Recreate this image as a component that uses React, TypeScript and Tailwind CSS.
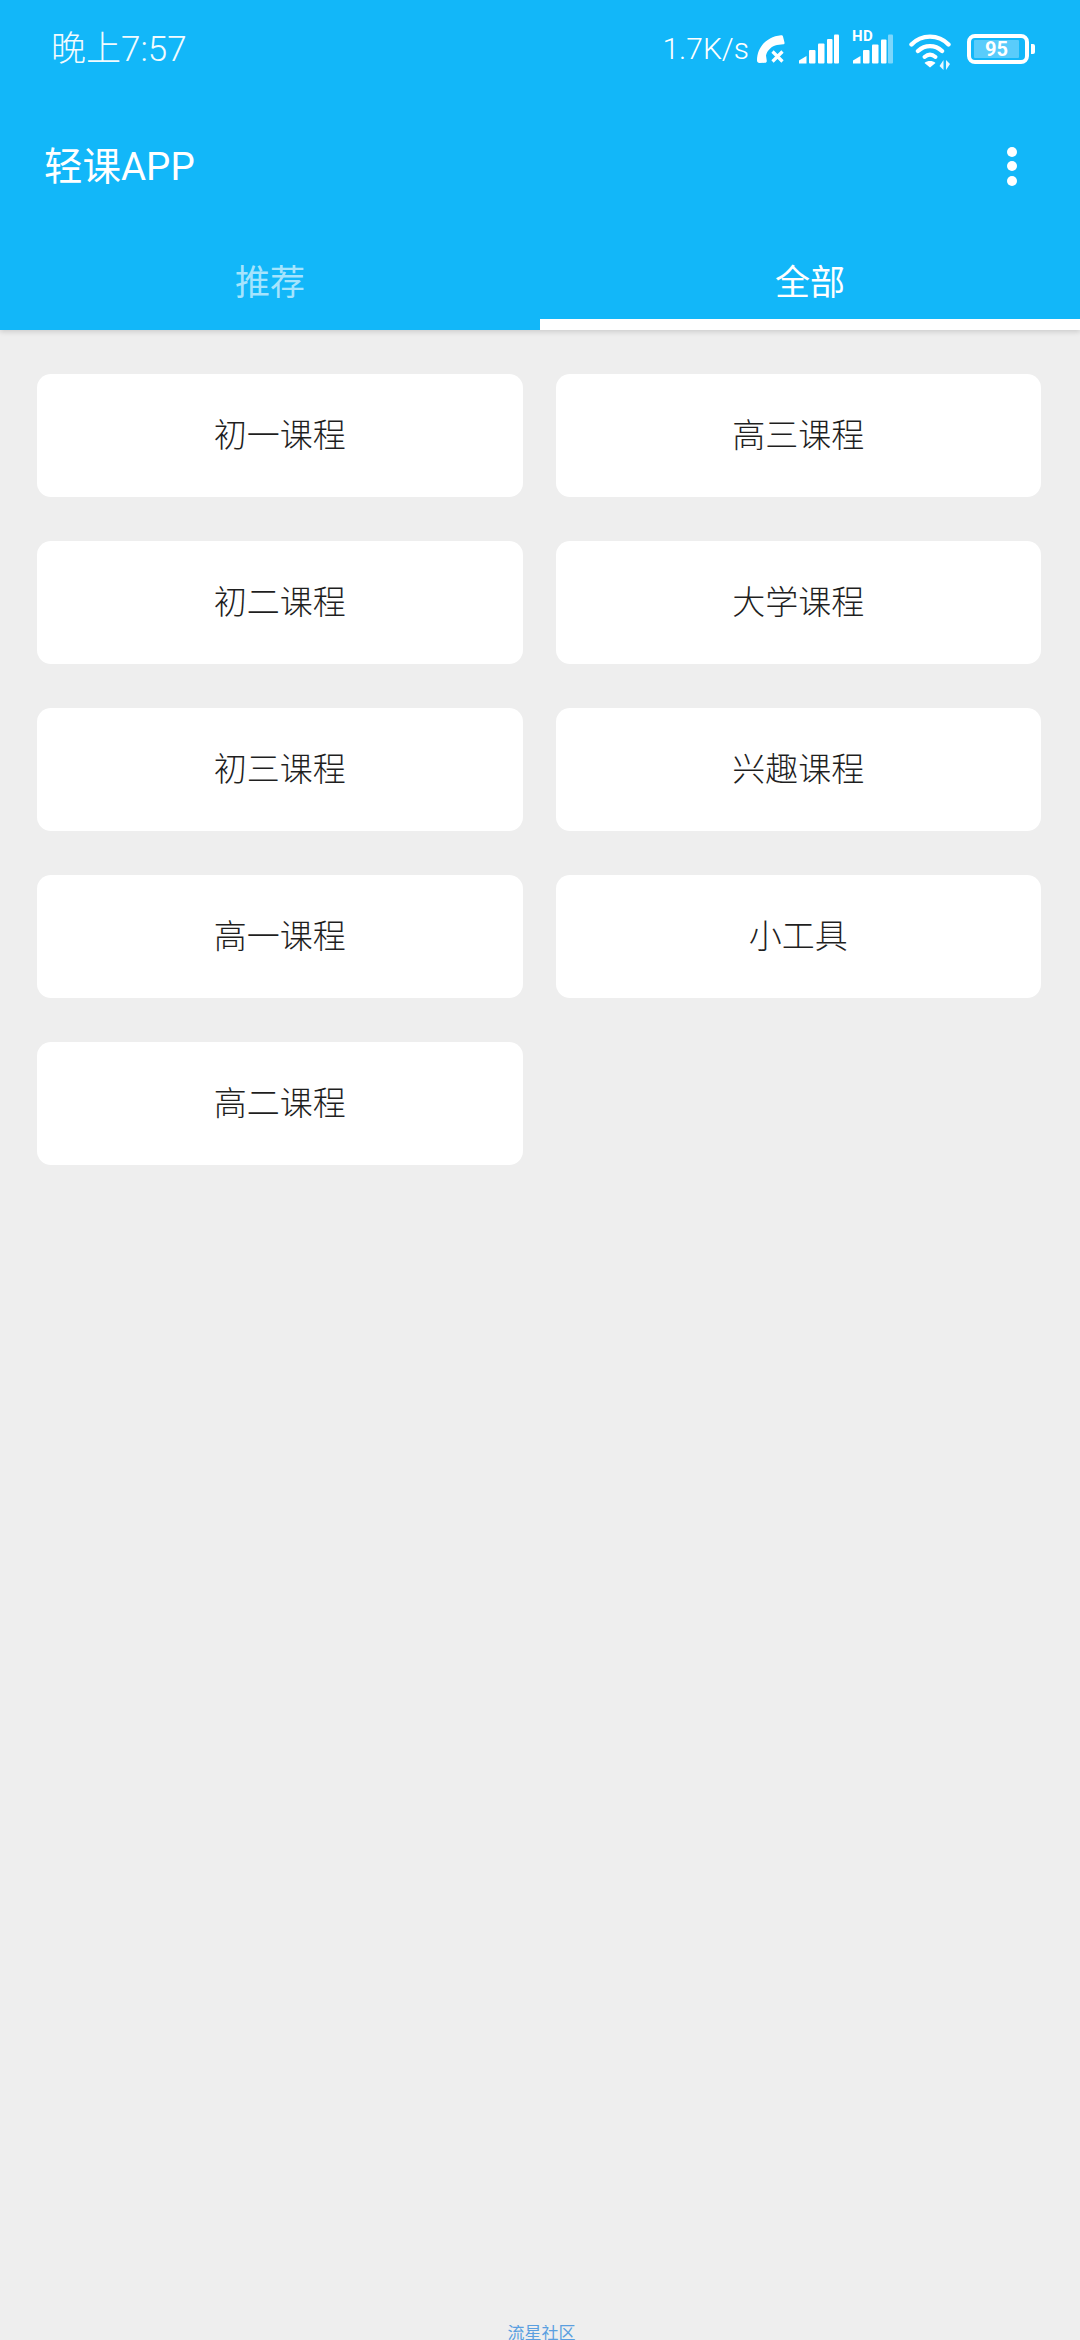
const FONT = "font-['Roboto','Noto_Sans_CJK_SC',sans-serif]";

function Phone() {
  return (
    <svg width="28" height="28" viewBox="0 0 28 28">
      <path d="M26 1.500L27.500 7.500c.2 1-.2 1.600-1.200 1.800L20 10c-5 .8-10 5.500-11 10.500l.8 5.500c0 1.200-.7 1.700-1.800 1.800L2.500 28C1 28 0 27 0 25.500 0 12 10 1.500 24 .2c1-.1 1.800.3 2 1.300z" fill="#fff" />
      <path d="M15.500 16.500l10 10M25.500 16.500l-10 10" stroke="#fff" strokeWidth="3.200" fill="none" />
    </svg>
  );
}

function Signal() {
  return (
    <svg width="40" height="30" viewBox="0 0 40 30">
      <path d="M0 29.500v-3L7.500 22v7.500z" fill="#fff" />
      <rect x="10" y="16" width="6.500" height="13.500" rx="1" fill="#fff" />
      <rect x="19" y="9.500" width="6.500" height="20" rx="1" fill="#fff" />
      <rect x="28" y="5" width="5.500" height="24.500" rx="1" fill="#fff" />
      <rect x="35" y="0.500" width="5" height="29" rx="1" fill="#fff" />
    </svg>
  );
}

function SignalHd() {
  return (
    <svg width="40" height="30" viewBox="0 0 40 30">
      <path d="M0 29.500v-3L7.500 22v7.500z" fill="#fff" />
      <rect x="10" y="16" width="6.500" height="13.500" rx="1" fill="#fff" />
      <rect x="19" y="10.500" width="6.500" height="19" rx="1" fill="#fff" />
      <rect x="28" y="5.500" width="5.500" height="24" rx="1" fill="#fff" />
      <rect x="35" y="0.500" width="5" height="29" rx="1" fill="#fff" fillOpacity="0.45" />
    </svg>
  );
}

function Wifi() {
  return (
    <svg width="44" height="36" viewBox="0 0 44 36">
      <path d="M2.500 10.500C12.500 0 29.500 0 39.500 10.500M9 17c7-6.500 17-6.500 24 0" stroke="#fff" strokeWidth="4.400" fill="none" strokeLinecap="round" />
      <path d="M15.500 23c3.500-3 7.500-3 11 0" stroke="#fff" strokeWidth="4" fill="none" strokeLinecap="round" />
      <path d="M15.500 29c3-2.600 8-2.600 11 0L21 33.500z" fill="#fff" />
      <path d="M34.500 36V26l-4 6zM37 26v10l4-6z" fill="#fff" fillOpacity="0.9" />
    </svg>
  );
}

function StatusBar() {
  return (
    <div className="h-[98px] flex items-center justify-between pl-[51px] pr-[45px] text-white">
      <span className="text-[35px] leading-none font-light opacity-95">晚上7:57</span>
      <div className="flex items-center">
        <span className="text-[30px] leading-none font-light mr-[8px]">1.7K/s</span>
        <Phone />
        <div className="ml-[14px]"><Signal /></div>
        <div className="ml-[14px] relative">
          <span className="absolute -top-[5px] -left-[1px] text-[15px] leading-none font-bold tracking-[0.5px]">HD</span>
          <SignalHd />
        </div>
        <div className="ml-[16px] mt-[6px]"><Wifi /></div>
        <div className="ml-[14px] flex items-center">
          <div className="w-[62px] h-[30px] rounded-[8px] border-[4px] border-white pl-[3px] pr-[6px] py-[2px]">
            <div className="w-full h-full rounded-[1px] bg-white/30 flex items-center justify-center text-[20px] font-bold leading-none">95</div>
          </div>
          <div className="w-[4px] h-[10px] ml-[2px] rounded-r-[2px] bg-white" />
        </div>
      </div>
    </div>
  );
}

function Header() {
  return (
    <header className="bg-[#12b7f9] h-[330px] flex flex-col shadow-[0_2px_5px_rgba(0,0,0,0.14)] relative">
      <StatusBar />
      <div className="h-[136px] flex items-center justify-between pl-[44px] pr-[63px]">
        <h1 className="text-[38.5px] leading-none font-normal text-white pt-[2px]">轻课APP</h1>
        <div className="flex flex-col gap-[4.500px]">
          <span className="size-[10px] rounded-full bg-white" />
          <span className="size-[10px] rounded-full bg-white" />
          <span className="size-[10px] rounded-full bg-white" />
        </div>
      </div>
      <div className="h-[96px] flex">
        <div className="flex-1 flex justify-center items-center pt-[2px] text-[35px] leading-none text-[#a5e4fd]">推荐</div>
        <div className="flex-1 flex justify-center items-center pt-[2px] text-[35px] leading-none text-white shadow-[inset_0_-11px_0_#ffffff]">全部</div>
      </div>
    </header>
  );
}

const courses = ["初一课程", "高三课程", "初二课程", "大学课程", "初三课程", "兴趣课程", "高一课程", "小工具", "高二课程"];

export default function App() {
  return (
    <div className={`${FONT} w-[1080px] h-[2340px] bg-[#eeeeee] flex flex-col overflow-hidden`}>
      <Header />
      <main className="flex-1 grid grid-cols-2 auto-rows-[123px] content-start gap-x-[33px] gap-y-[44px] pt-[44px] pl-[37px] pr-[39px]">
        {courses.map((c) => (
          <div key={c} className="bg-white rounded-[14px] flex items-center justify-center text-[33px] leading-none font-light text-[#1f1f1f]">{c}</div>
        ))}
      </main>
      <footer className="h-[15px] flex justify-center pl-[3px] text-[17px] leading-none text-[#5a9fe0] overflow-hidden">
        <span>流星社区</span>
      </footer>
    </div>
  );
}
